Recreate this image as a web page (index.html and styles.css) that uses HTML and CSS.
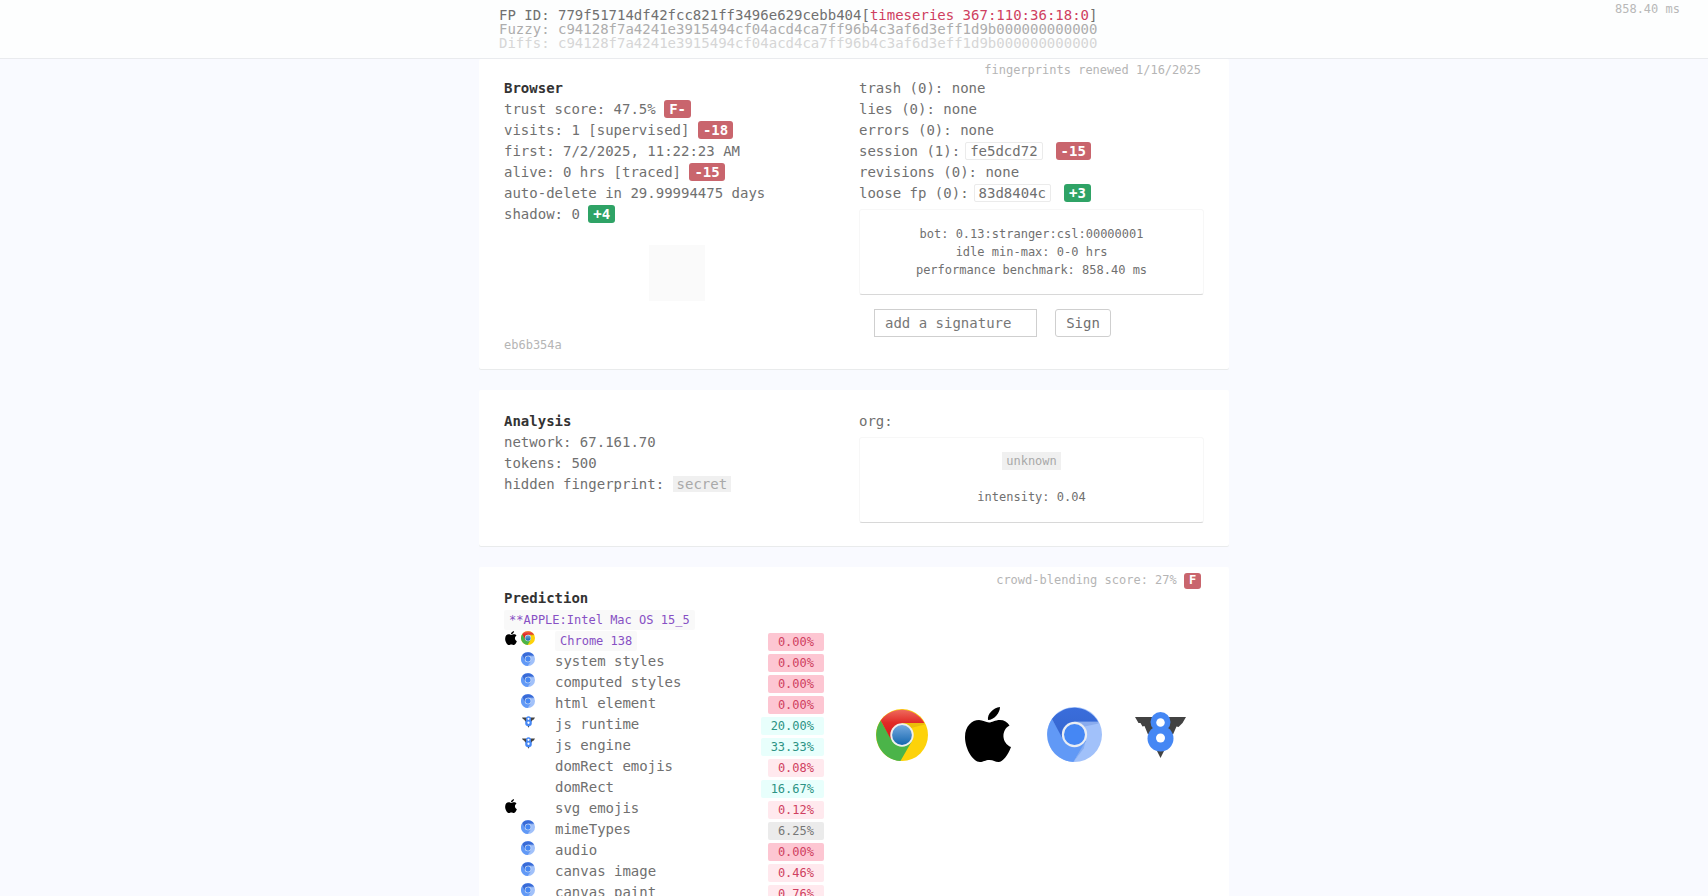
FILE: index.html
```html
<!DOCTYPE html>
<html lang="en">
<head>
<meta charset="utf-8">
<title>Fingerprint</title>
<link rel="stylesheet" href="styles.css">
</head>
<body>
<svg class="defs" aria-hidden="true">
  <defs>
    <linearGradient id="gr" x1="0" y1="0" x2="0" y2="1"><stop offset="0" stop-color="#ee6a5c"/><stop offset=".45" stop-color="#e12a27"/><stop offset="1" stop-color="#d8181c"/></linearGradient>
    <linearGradient id="gb" x1="0" y1="0" x2="0" y2="1"><stop offset="0" stop-color="#73a8de"/><stop offset="1" stop-color="#1668b0"/></linearGradient>
    <linearGradient id="gd" x1="0" y1="0" x2="0" y2="1"><stop offset="0" stop-color="#3a6ddb"/><stop offset="1" stop-color="#3566cf"/></linearGradient>
  </defs>
  <symbol id="chrome" viewBox="0 0 100 100">
    <circle cx="50" cy="50" r="50" fill="#fdd20a"/>
    <path d="M9 22A50 50 0 0 0 47 100L70 60 50 50 29 57Z" fill="#4bb449"/>
    <path d="M9 22A50 50 0 0 1 93 27H50L28 57Z" fill="url(#gr)"/>
    <path d="M50 27H93L94 30 65 37Z" fill="#d9a80a" opacity=".5"/>
    <circle cx="50" cy="50" r="22.500" fill="#f0f0ee"/>
    <circle cx="50" cy="50" r="19" fill="url(#gb)"/>
  </symbol>
  <symbol id="chromium" viewBox="0 0 100 100">
    <circle cx="50" cy="50" r="50" fill="#a1c1fa"/>
    <path d="M9 22A50 50 0 0 0 48 100L71 62 50 50 29 56Z" fill="#6199f6"/>
    <path d="M9 22A50 50 0 0 1 93 27H50L28 57Z" fill="url(#gd)"/>
    <path d="M70 61L48 100 67 75Z" fill="#7ba5ee" opacity=".7"/>
    <path d="M50 27H93L94 30 66 36Z" fill="#7b9fe6" opacity=".6"/>
    <circle cx="50" cy="50" r="23" fill="#e9edf3"/>
    <circle cx="50" cy="50" r="19" fill="#4587f4"/>
  </symbol>
  <symbol id="apple" viewBox="0 0 46 55">
    <path d="M35 0C35 6 29 13 23 13 22 7 28 1 35 0Z"/>
    <path d="M44.500 18.500C36 23 36.500 36 46 40 43 48 38 55 33.500 55 30 55 28.500 53 24.500 53 20 53 18.500 55 15 55 8 55 0 42 0 30 0 19 7 13 14 13 18 13 21 15.500 24 15.500 27 15.500 30 13 35 13 39 13 42.500 15 44.500 18.500Z"/>
  </symbol>
  <symbol id="v8" viewBox="0 0 102 92">
    <path d="M0 10H36V38L26 45 19 28 15 29 11 22 7 22Z" fill="#424242"/>
    <path d="M102 10H66V38L76 45 83 29 87 30 91 26 95 22Z" fill="#424242"/>
    <path d="M43 76H59L51 92Z" fill="#424242"/>
    <circle cx="51" cy="20" r="20" fill="#4587f4"/>
    <circle cx="51" cy="53" r="26" fill="#4587f4"/>
    <circle cx="51" cy="21" r="8.500" fill="#fff"/><circle cx="51" cy="52" r="9" fill="#fff"/>
  </symbol>
</svg>

<header class="top">
  <div class="ids">
    <div>FP ID: 779f51714df42fcc821ff3496e629cebb404[<span class="series">timeseries 367:110:36:18:0</span>]</div>
    <div class="fuzzy">Fuzzy: c94128f7a4241e3915494cf04acd4ca7ff96b4c3af6d3eff1d9b000000000000</div>
    <div class="diffs">Diffs: c94128f7a4241e3915494cf04acd4ca7ff96b4c3af6d3eff1d9b000000000000</div>
  </div>
  <div class="time">858.40 ms</div>
</header>

<main>
  <section class="card browser">
    <div class="note">fingerprints renewed 1/16/2025</div>
    <div class="cols">
      <div>
        <strong>Browser</strong>
        <div>trust score: 47.5% <span class="grade bad">F-</span></div>
        <div>visits: 1 [supervised] <span class="grade bad">-18</span></div>
        <div>first: 7/2/2025, 11:22:23 AM</div>
        <div>alive: 0 hrs [traced] <span class="grade bad">-15</span></div>
        <div>auto-delete in 29.99994475 days</div>
        <div>shadow: 0 <span class="grade good">+4</span></div>
        <div class="square"></div>
        <div class="hash">eb6b354a</div>
      </div>
      <div>
        <div>trash (0): none</div>
        <div>lies (0): none</div>
        <div>errors (0): none</div>
        <div class="line">session (1):<span class="code">fe5dcd72</span><span class="grade bad">-15</span></div>
        <div>revisions (0): none</div>
        <div class="line">loose fp (0):<span class="code">83d8404c</span><span class="grade good">+3</span></div>
        <div class="panel">
          <div>bot: 0.13:stranger:csl:00000001</div>
          <div>idle min-max: 0-0 hrs</div>
          <div>performance benchmark: 858.40 ms</div>
        </div>
        <div class="form"><input class="field" type="text" placeholder="add a signature"><button class="sign">Sign</button></div>
      </div>
    </div>
  </section>

  <section class="card analysis">
    <div class="cols">
      <div>
        <strong>Analysis</strong>
        <div>network: 67.161.70</div>
        <div>tokens: 500</div>
        <div>hidden fingerprint: <span class="blocked">secret</span></div>
      </div>
      <div>
        <div>org:</div>
        <div class="panel org">
          <div><span class="blocked small">unknown</span></div>
          <div class="intensity">intensity: 0.04</div>
        </div>
      </div>
    </div>
  </section>

  <section class="card prediction">
    <div class="note">crowd-blending score: 27% <span class="mark">F</span></div>
    <div class="cols">
      <div>
        <strong>Prediction</strong>
        <div class="ua"><span class="pill">**APPLE:Intel Mac OS 15_5</span></div>
        <div class="row"><svg class="i a"><use href="#apple"/></svg><svg class="i"><use href="#chrome"/></svg><span class="name"><span class="pill">Chrome 138</span></span><b class="pct zero">0.00%</b></div>
        <div class="row"><i></i><svg class="i"><use href="#chromium"/></svg><span class="name">system styles</span><b class="pct zero">0.00%</b></div>
        <div class="row"><i></i><svg class="i"><use href="#chromium"/></svg><span class="name">computed styles</span><b class="pct zero">0.00%</b></div>
        <div class="row"><i></i><svg class="i"><use href="#chromium"/></svg><span class="name">html element</span><b class="pct zero">0.00%</b></div>
        <div class="row"><i></i><svg class="i v"><use href="#v8"/></svg><span class="name">js runtime</span><b class="pct high">20.00%</b></div>
        <div class="row"><i></i><svg class="i v"><use href="#v8"/></svg><span class="name">js engine</span><b class="pct high">33.33%</b></div>
        <div class="row"><i></i><i></i><span class="name">domRect emojis</span><b class="pct low">0.08%</b></div>
        <div class="row"><i></i><i></i><span class="name">domRect</span><b class="pct high">16.67%</b></div>
        <div class="row"><svg class="i a"><use href="#apple"/></svg><i></i><span class="name">svg emojis</span><b class="pct low">0.12%</b></div>
        <div class="row"><i></i><svg class="i"><use href="#chromium"/></svg><span class="name">mimeTypes</span><b class="pct mid">6.25%</b></div>
        <div class="row"><i></i><svg class="i"><use href="#chromium"/></svg><span class="name">audio</span><b class="pct zero">0.00%</b></div>
        <div class="row"><i></i><svg class="i"><use href="#chromium"/></svg><span class="name">canvas image</span><b class="pct low">0.46%</b></div>
        <div class="row"><i></i><svg class="i"><use href="#chromium"/></svg><span class="name">canvas paint</span><b class="pct low">0.76%</b></div>
      </div>
      <div class="logos">
        <svg width="52" height="52"><use href="#chrome"/></svg>
        <svg width="46" height="55"><use href="#apple"/></svg>
        <svg width="55" height="55"><use href="#chromium"/></svg>
        <svg width="51" height="46"><use href="#v8"/></svg>
      </div>
    </div>
  </section>
</main>
</body>
</html>
```
FILE: styles.css
```css
* { box-sizing: border-box; }
html, body { height: 100%; overflow: hidden; }
body {
  margin: 0;
  background: #f9faff;
  color: #707070;
  font: 14px/21px "DejaVu Sans Mono", monospace;
}
.defs { position: absolute; width: 0; height: 0; }
.top {
  display: flex;
  justify-content: space-between;
  height: 59px;
  padding: 8px 28px 0 499px;
  background: #fdfefe;
  border-bottom: 1px solid #e9ebee;
  line-height: 14px;
  white-space: nowrap;
}
.fuzzy { color: #adadad; }
.diffs { color: #d6d6d6; }
.series { color: #cf3f60; }
.time { margin-top: -6px; color: #b8b8b8; font-size: 12px; }
main { display: flex; flex-direction: column; gap: 21px; width: 750px; margin: 0 auto; }
.card {
  flex: none;
  padding: 20px 25px 0;
  background: #fff;
  border-radius: 2px;
  box-shadow: 0 1px 0 #e9ebec;
}
.browser { height: 310px; padding-top: 2px; }
.analysis { height: 156px; padding-top: 21px; }
.prediction { height: 400px; padding-top: 4px; }
.note { height: 17px; padding-right: 3px; color: #b5b5b5; font-size: 12px; line-height: 18px; text-align: right; }
.cols { display: grid; grid-template-columns: 320px 345px; column-gap: 35px; }
strong { display: block; color: #333; }
.grade { display: inline-block; height: 18px; padding: 0 5px; border-radius: 3px; color: #fff; font-weight: bold; line-height: 18px; vertical-align: top; margin-top: 1px; }
.bad, .mark { background: #c9656d; }
.good { background: #2fa366; }
.square { width: 56px; height: 56px; margin: 20px 0 0 145px; background: #fafafa; }
.hash { margin-top: 35px; color: #b5b5b5; font-size: 12px; line-height: 18px; }
.line { display: flex; }
.code { height: 18px; margin: 1px 13px 0 5px; padding: 0 4px; border: 1px solid #ebebeb; border-radius: 2px; line-height: 17px; }
.panel {
  height: 86px;
  margin-top: 5px;
  padding: 15px 0 0;
  border: 1px solid #f7f7f7;
  border-bottom-color: #d8d8d8;
  border-radius: 3px;
  font-size: 12px;
  line-height: 18px;
  text-align: center;
}
.form { display: flex; gap: 18px; padding: 14px 15px 0; }
.field, .sign { height: 28px; border: 1px solid #cfcfcf; background: #fff; color: #707070; font: inherit; }
.field { width: 163px; padding: 0 10px; }
.field::placeholder { color: #777; }
.sign { width: 56px; padding: 0; border-radius: 3px; }
.blocked { display: inline-block; height: 16px; margin-top: 2px; padding: 0 4px; background: #f0f0f0; color: #a9a9a9; line-height: 17px; vertical-align: top; }
.org { padding-top: 14px; }
.small { height: 18px; margin: 0; line-height: 18px; }
.intensity { margin-top: 18px; }
.mark { display: inline-block; width: 17px; height: 16px; border-radius: 3px; color: #fff; font-weight: bold; line-height: 15px; text-align: center; vertical-align: top; margin-top: 2px; }
.pill { display: inline-block; height: 20px; padding: 0 5px; border-radius: 2px; background: #f9f9f9; color: #8750c4; font-size: 12px; line-height: 20px; vertical-align: top; }
.ua { padding-top: 1px; }
.ua, .row { height: 21px; }
.row { display: grid; grid-template-columns: 17px 14px 1fr auto; }
.i { width: 14px; height: 14px; margin-top: 1px; }
.a { width: 12px; margin-left: 1px; }
.v { width: 13px; height: 12px; margin: 2px 0 0 1px; }
.name { padding-left: 20px; }
.name .pill { margin-top: 1px; }
.pct { height: 18px; margin-top: 3px; padding: 0 10px; border-radius: 2px; font-size: 12px; font-weight: normal; line-height: 18px; }
.zero { background: #fdc6d2; color: #cf3f60; }
.low { background: #ffe9ee; color: #cf3f60; }
.high { background: #e8fffc; color: #2d9384; }
.mid { background: #ebebeb; color: #777; }
.logos { display: grid; grid-template-columns: repeat(4, 86px); height: 55px; margin-top: 119px; place-items: center; }
```
